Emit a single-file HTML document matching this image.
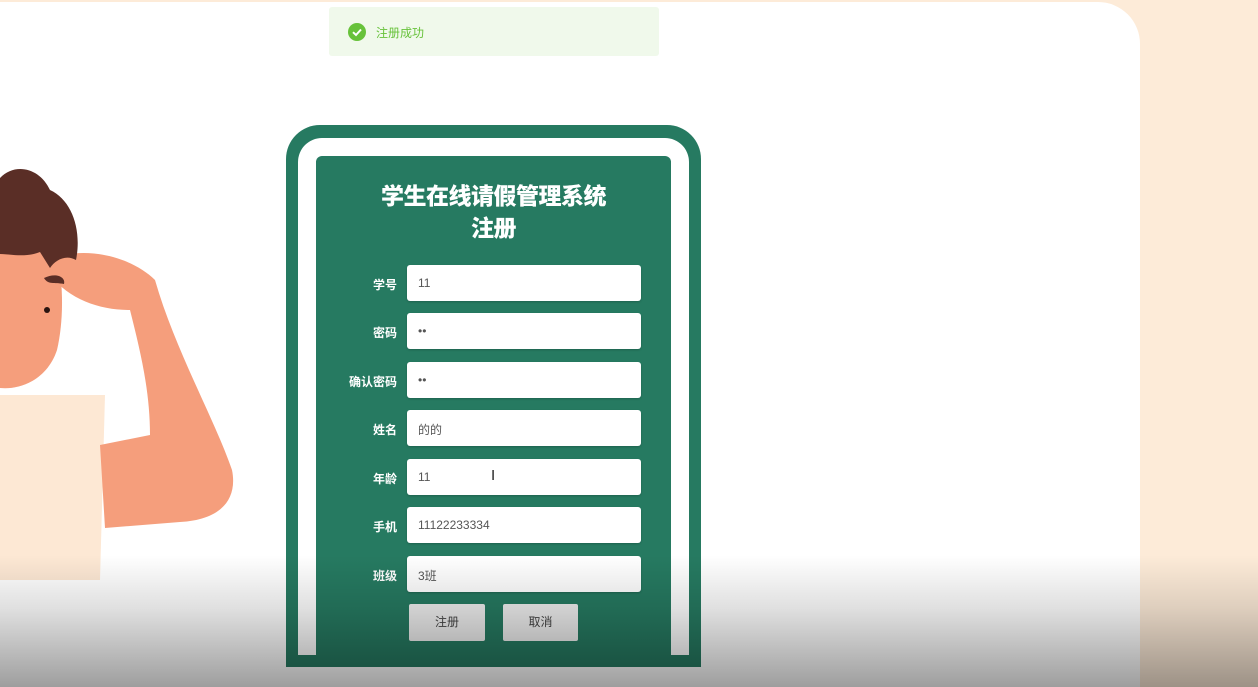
<!DOCTYPE html>
<html><head><meta charset="utf-8"><style>
*{margin:0;padding:0;box-sizing:border-box}
html,body{width:1258px;height:687px;overflow:hidden}
body{background:#fdebd8;position:relative;font-family:"Liberation Sans","Noto Sans CJK SC",sans-serif}
.white{position:absolute;left:0;top:2px;width:1140px;height:685px;background:#fff;border-top-right-radius:42px}
.toast{position:absolute;left:329px;top:7px;width:330px;height:49px;background:#f0f9eb;border-radius:3px}
.toast span{position:absolute;left:47px;top:17px;font-size:12px;color:#67c23a}
.outer{position:absolute;left:286px;top:125px;width:415px;height:542px;background:#267a61;border-radius:34px 34px 0 0}
.frame{position:absolute;left:298px;top:138px;width:391px;height:517px;background:#fff;border-radius:24px 24px 0 0}
.panel{position:absolute;left:316px;top:156px;width:355px;height:511px;background:#267a61;border-radius:6px 6px 0 0}
h1{position:absolute;left:316px;width:355px;text-align:center;color:#fff;font-size:23px;font-weight:900;line-height:32px;letter-spacing:-0.5px}
.lab{position:absolute;width:100px;left:297px;text-align:right;color:#fff;font-size:12px;font-weight:bold}
.inp{position:absolute;left:407px;width:234px;height:36px;background:#fff;border-radius:3px;font-size:12px;color:#555;padding:11px 0 0 11px;box-shadow:0 1px 2px rgba(0,0,0,0.2)}
.btn{position:absolute;top:604px;height:37px;background:#eee;border-radius:2px;color:#444;font-size:12px;text-align:center;line-height:37px}
.shade{position:absolute;left:0;top:555px;width:1258px;height:132px;background:linear-gradient(rgba(0,0,0,0),rgba(0,0,0,0.12) 40%,rgba(0,0,0,0.38))}
</style></head><body>
<div class="white"></div>
<svg style="position:absolute;left:0;top:150px" width="260" height="430">
<path d="M0 245 L105 245 L100 430 L0 430Z" fill="#fde8d4"/>
<path d="M50 110 C80 95 130 105 155 130 C175 200 215 270 232 320 C238 350 220 370 180 372 L105 378 L100 295 L150 285 C150 240 140 200 130 160 C100 160 70 150 50 125Z" fill="#f59e7c"/>
<path d="M0 85 L55 95 C64 130 64 170 57 200 C47 230 20 240 0 238Z" fill="#f59e7c"/>
<path d="M0 28 C15 12 40 18 50 40 C72 50 82 80 76 110 C66 104 55 110 50 118 L40 102 C25 108 10 104 0 104Z" fill="#5a2e26"/>
<path d="M44 128 C56 122 66 127 64 134 C54 132 48 135 44 128Z" fill="#5a2e26"/>
<circle cx="47" cy="160" r="3" fill="#2a1410"/>
</svg>
<div class="toast"><svg style="position:absolute;left:19px;top:16px" width="18" height="18"><circle cx="9" cy="9" r="9" fill="#67c23a"/><path d="M5 9.2 L8 12 L13 6.5" stroke="#fff" stroke-width="2" fill="none"/></svg><span>注册成功</span></div>
<div class="outer"></div><div class="frame"></div><div class="panel"></div>
<h1 style="top:180px">学生在线请假管理系统</h1>
<h1 style="top:212px">注册</h1>
<div class="lab" style="top:276px">学号</div><div class="inp" style="top:265px">11</div>
<div class="lab" style="top:324px">密码</div><div class="inp" style="top:313px">••</div>
<div class="lab" style="top:373px">确认密码</div><div class="inp" style="top:362px">••</div>
<div class="lab" style="top:421px">姓名</div><div class="inp" style="top:410px">的的</div>
<div class="lab" style="top:470px">年龄</div><div class="inp" style="top:459px">11<span style="position:absolute;left:84px;top:8px;font-size:15px;color:#222">I</span></div>
<div class="lab" style="top:518px">手机</div><div class="inp" style="top:507px">11122233334</div>
<div class="lab" style="top:567px">班级</div><div class="inp" style="top:556px">3班</div>
<div class="btn" style="left:409px;width:76px">注册</div>
<div class="btn" style="left:503px;width:75px">取消</div>
<div class="shade"></div>
</body></html>
